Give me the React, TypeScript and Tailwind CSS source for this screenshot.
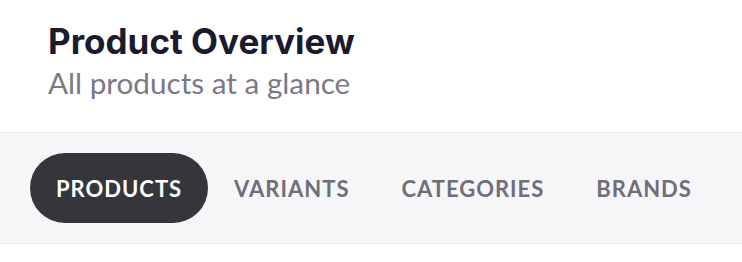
import { useState } from "react";

const tabs = ["Products", "Variants", "Categories", "Brands"];

export default function App() {
  const [active, setActive] = useState("Products");

  return (
    <div className="min-h-[262px] w-full bg-white">
      <header className="px-12 pt-5 pb-8">
        <h1 className="font-['Inter',sans-serif] text-[35px] font-bold leading-[42px] text-[#1b1a2e]">
          Product Overview
        </h1>
        <p className="mt-1 font-['Lato',sans-serif] text-[29.7px] leading-[34px] text-[#7a7985]">All products at a glance</p>
      </header>
      <nav className="flex items-center border-y border-[#e7e7ea] bg-[#f6f6f8] px-[30px] py-5">
        {tabs.map((tab) => (
          <button
            key={tab}
            onClick={() => setActive(tab)}
            className={
              tab === active
                ? "h-[70px] rounded-full bg-[#36353b] px-[26px] font-['Lato',sans-serif] text-[22px] font-bold uppercase tracking-[0.045em] text-white"
                : "h-[70px] rounded-full px-[26px] font-['Lato',sans-serif] text-[22px] font-bold uppercase tracking-[0.045em] text-[#6f6e79]"
            }
          >
            {tab}
          </button>
        ))}
      </nav>
    </div>
  );
}
